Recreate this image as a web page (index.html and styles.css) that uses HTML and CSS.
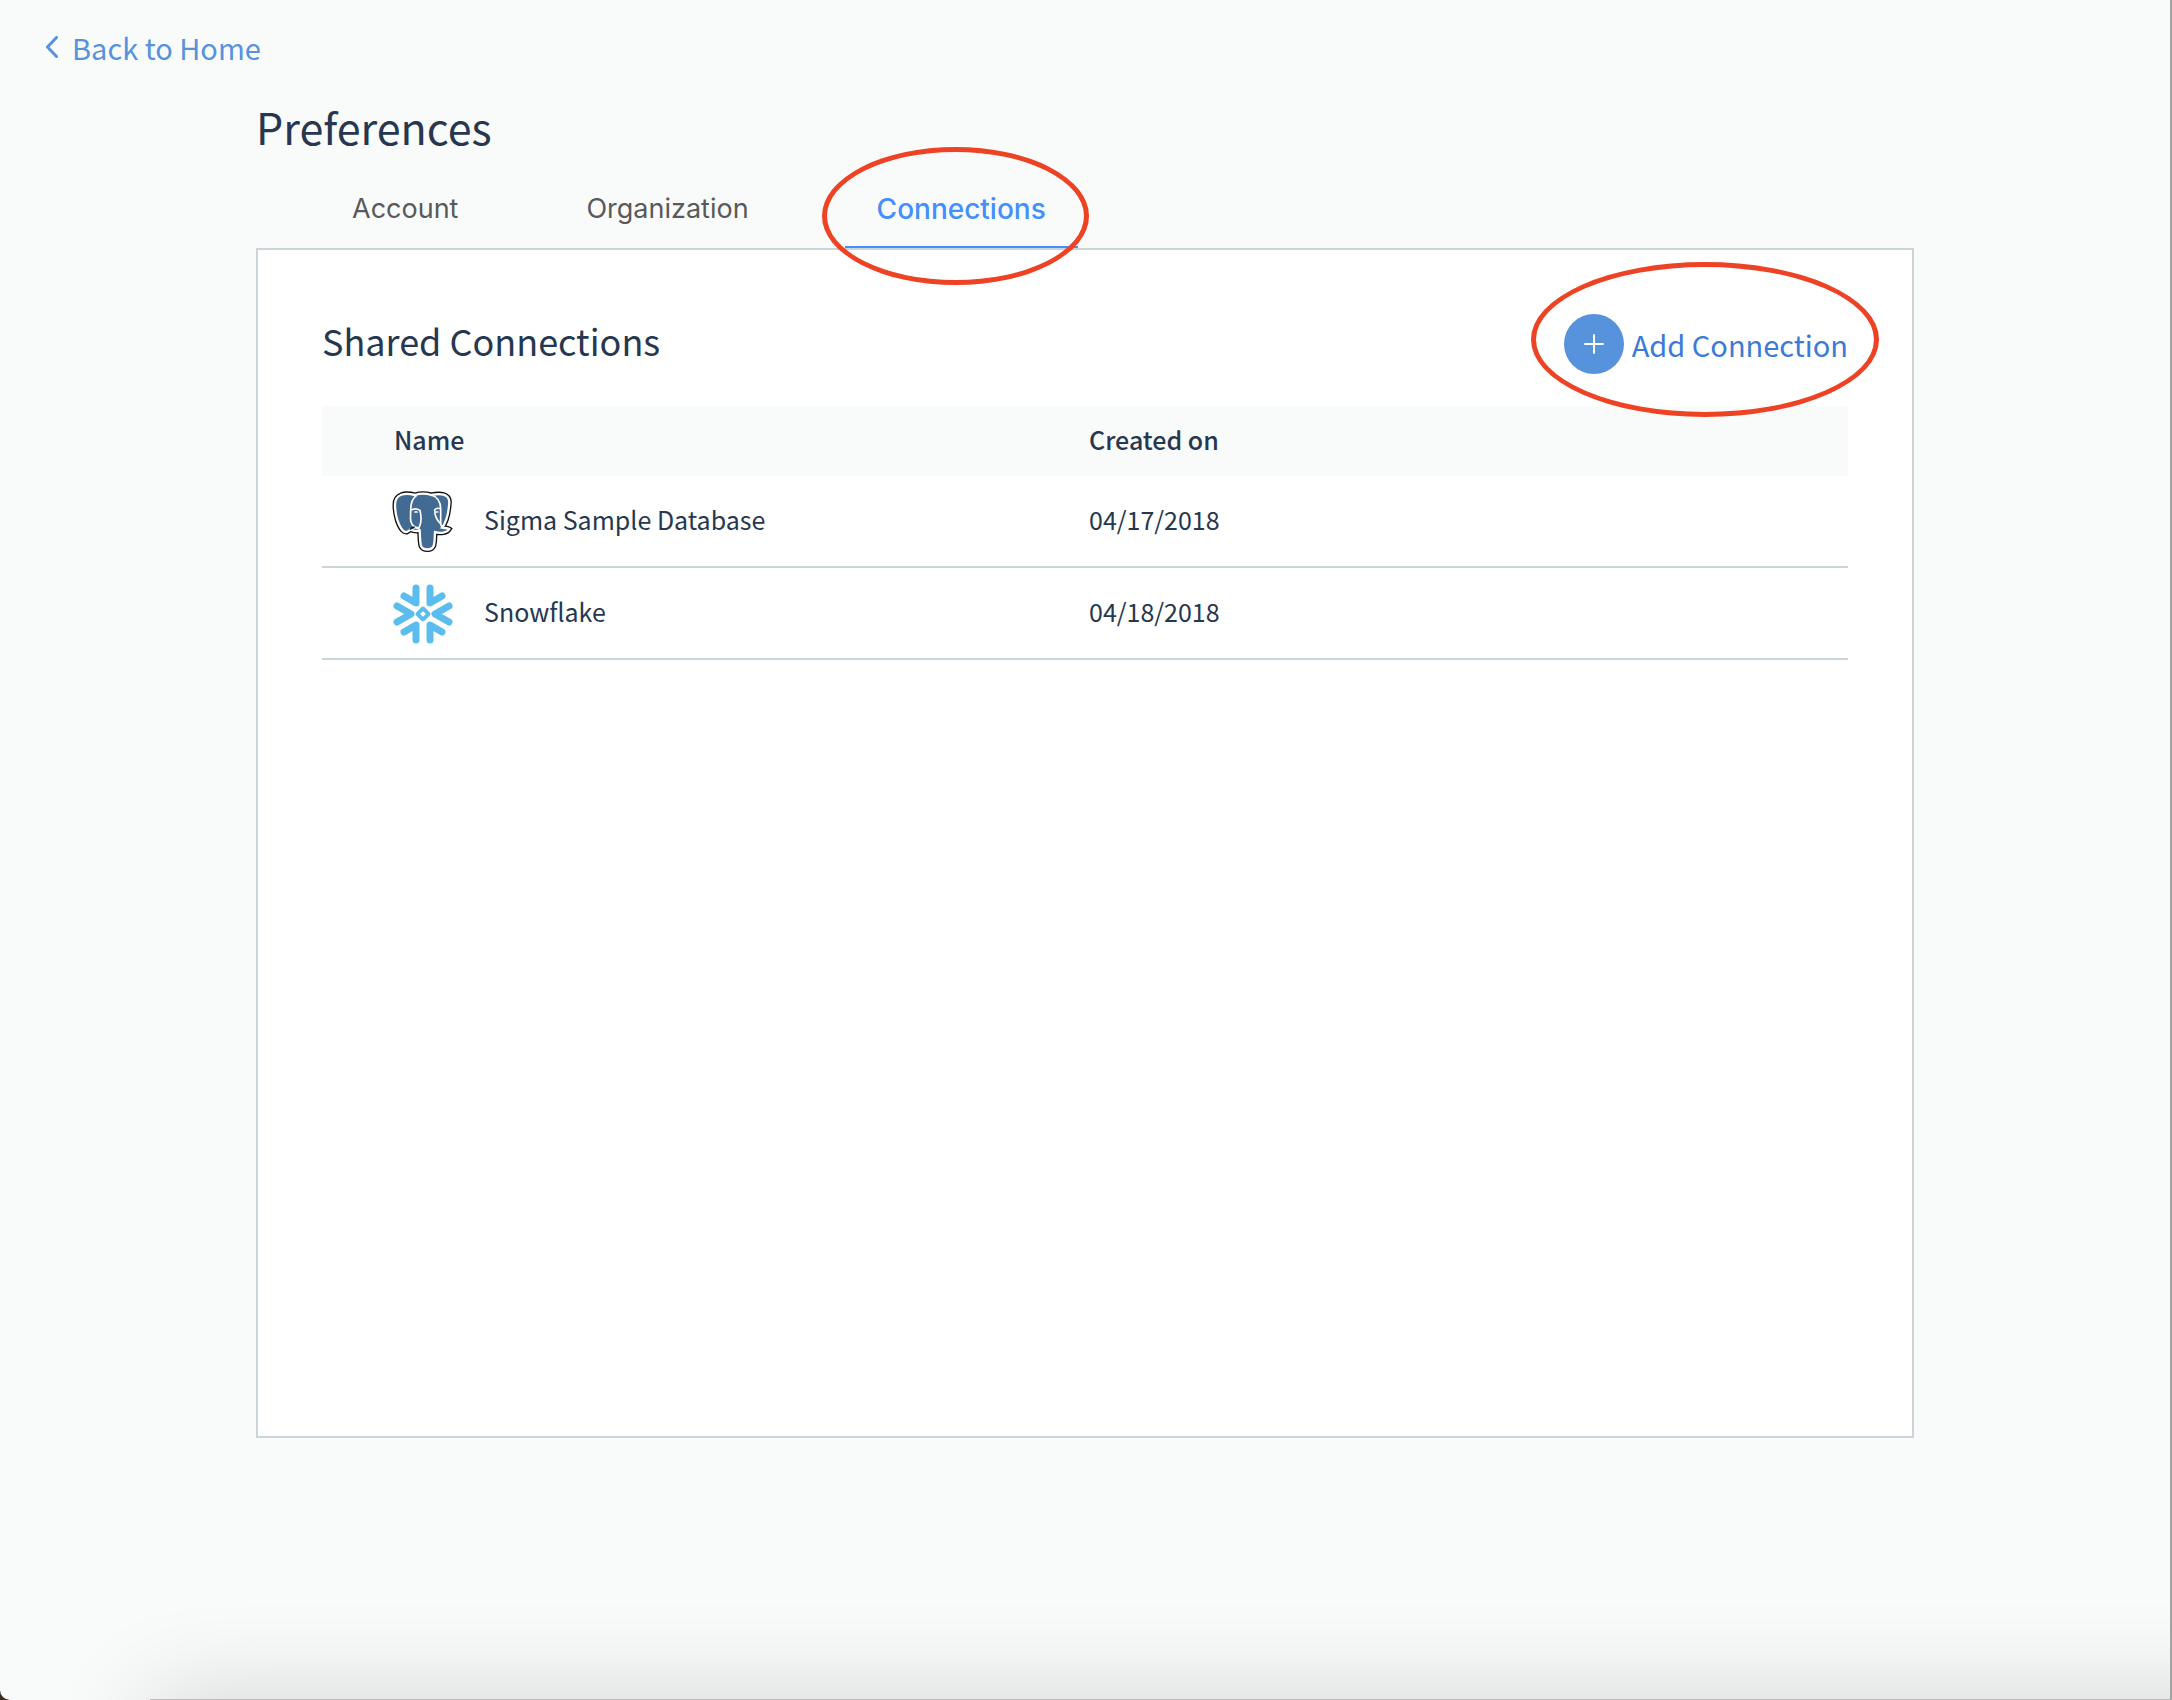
FILE: index.html
```html
<!DOCTYPE html>
<html lang="en">
<head>
<meta charset="utf-8">
<title>Preferences</title>
<link rel="stylesheet" href="styles.css">
</head>
<body>
<div class="window">
  <nav class="topbar">
    <a class="back" href="#">
      <svg class="back-icon" viewBox="0 0 12 22" aria-hidden="true"><path d="M10.500 1.500 1.500 11l9 9.500"/></svg>
      Back to Home
    </a>
  </nav>
  <main class="page">
    <h1 class="page-title">Preferences</h1>
    <div class="tabs" role="tablist">
      <button class="tab" role="tab" type="button">Account</button>
      <button class="tab" role="tab" type="button">Organization</button>
      <button class="tab tab-active" role="tab" type="button" aria-selected="true">Connections<span class="ring ring-tab"></span></button>
    </div>
    <section class="panel">
      <header class="panel-head">
        <h2 class="panel-title">Shared Connections</h2>
        <button class="add" type="button">
          <span class="add-icon"><svg viewBox="0 0 20 20" aria-hidden="true"><path d="M10 1v18M1 10h18"/></svg></span>
          Add Connection
          <span class="ring ring-add"></span>
        </button>
      </header>
      <table class="connections">
        <thead>
          <tr><th class="col-name">Name</th><th>Created on</th></tr>
        </thead>
        <tbody>
          <tr>
            <td class="col-name"><div class="source">
              <svg class="logo" viewBox="12 18 180 180" aria-hidden="true">
                <path class="pg-out" d="M75 30C45 22 15 26 15 60c0 30 10 62 23 76 9 9 17 5 23-3l9 4q9 2 19 0c1 18 1 36 4 46 6 14 32 14 38 0 4-12 3-26 4-42 16 5 36 3 43-9-6-4-14-2-22-4 12-14 20-46 22-76C178 26 150 24 124 30 108 25 90 25 75 30Z"/>
                <path class="pg-body" d="M75 30C45 22 15 26 15 60c0 30 10 62 23 76 9 9 17 5 23-3l9 4q9 2 19 0c1 18 1 36 4 46 6 14 32 14 38 0 4-12 3-26 4-42 16 5 36 3 43-9-6-4-14-2-22-4 12-14 20-46 22-76C178 26 150 24 124 30 108 25 90 25 75 30Z"/>
                <path class="pg-line" d="M80 31C66 40 62 56 62 76c8-5 20-5 28 0 4 18 5 36-2 50-6 8-22-2-26-18-1-12 0-20 0-32M124 30c20 6 28 22 28 42v42c0 6 2 10 6 13M152 72c-6-3-14-2-18 3 0 18 8 32 18 42M89 137c-2-10-12-12-19-7"/>
                <path class="pg-tusk" d="M60 134c3-5 8-7 14-8"/>
                <path class="pg-eye" d="M73 81h10M138 81h7"/>
              </svg>
              <span class="source-name">Sigma Sample Database</span>
            </div></td>
            <td><time class="date" datetime="2018-04-17">04/17/2018</time></td>
          </tr>
          <tr>
            <td class="col-name"><div class="source">
              <svg class="logo" viewBox="0 0 60 60" aria-hidden="true">
                <g class="sf">
                  <path d="M22 5v15L10 13M36 5v15l12-7M22 57V42l-12 7M36 57V42l12 7M3 23l14 8-14 8M55 23l-14 8 14 8"/>
                  <rect class="sf-core" x="25" y="27" width="8" height="8" rx="1" transform="rotate(45 29 31)"/>
                </g>
              </svg>
              <span class="source-name">Snowflake</span>
            </div></td>
            <td><time class="date" datetime="2018-04-18">04/18/2018</time></td>
          </tr>
        </tbody>
      </table>
    </section>
  </main>
  <div class="dock-shadow"></div>
</div>
</body>
</html>
```
FILE: styles.css
```css
* { box-sizing: border-box; }

body {
  margin: 0;
  background: #3a2c1c;
  color: #26374f;
  font-family: "Noto Sans CJK SC", "Noto Sans", sans-serif;
  font-size: 25px;
  line-height: 36px;
}

button {
  padding: 0;
  border: 0;
  background: none;
  font: inherit;
  cursor: pointer;
}

.window {
  position: relative;
  min-height: 100vh;
  overflow: hidden;
  border-right: 2px solid #a0a4a3;
  border-bottom-left-radius: 10px;
  background: #f9fbfa;
}

.topbar {
  display: flex;
  padding: 26px 46px 0;
}

.back {
  display: flex;
  align-items: center;
  gap: 14px;
  color: #5792dd;
  font-size: 29px;
  line-height: 42px;
  text-decoration: none;
}

.back-icon {
  width: 12px;
  height: 22px;
  fill: none;
  stroke: currentColor;
  stroke-width: 3;
  stroke-linecap: round;
  stroke-linejoin: round;
}

.page { padding: 26px 256px 0; }

.page-title {
  margin: 0;
  font-size: 43px;
  font-weight: 400;
  line-height: 64px;
}

.tabs {
  display: flex;
  gap: 64px;
  padding: 0 64px;
}

.tab {
  position: relative;
  padding: 28px 32px 14px;
  border-bottom: 2px solid transparent;
  color: #595959;
  font-family: Inter, sans-serif;
  font-size: 27px;
  line-height: 46px;
}

.tab-active {
  border-color: #438ffb;
  color: #438ffb;
  font-size: 28px;
  font-weight: 500;
}

.panel {
  min-height: 70vh;
  padding: 64px;
  border: 2px solid #cbd5d9;
  background: #fff;
}

.panel-head {
  display: flex;
  align-items: flex-start;
  justify-content: space-between;
  margin-bottom: 32px;
}

.panel-title {
  margin: 0;
  font-size: 36px;
  font-weight: 400;
  line-height: 52px;
}

.add {
  position: relative;
  display: flex;
  align-items: center;
  gap: 8px;
  color: #3b7ad6;
  font-size: 29px;
  line-height: 60px;
}

.add-icon {
  display: grid;
  place-items: center;
  width: 60px;
  height: 60px;
  border-radius: 50%;
  background: #5792dd;
}

.add-icon svg {
  width: 20px;
  height: 20px;
  stroke: #fff;
  stroke-width: 2;
  stroke-linecap: round;
}

/* Hand-drawn style highlight around a control */
.ring {
  position: absolute;
  border: 5px solid #ee4224;
  border-radius: 50%;
  pointer-events: none;
}

.ring-tab { inset: -11px -11px -39px -23px; z-index: 1; }
.ring-add { inset: -52px -31px -43px -33px; }

.connections {
  width: 100%;
  border-collapse: separate;
  border-spacing: 0;
  table-layout: fixed;
}

.connections th {
  height: 70px;
  padding: 0 0 4px;
  background: #f9fbfa;
  font-weight: 500;
  text-align: left;
}

.connections td {
  height: 92px;
  padding: 0;
  border-bottom: 2px solid #cbd5d9;
}

.connections .col-name {
  width: 767px;
  padding-left: 72px;
}

.source {
  display: flex;
  align-items: center;
  gap: 30px;
}

.source-name,
.date {
  display: block;
  padding-bottom: 4px;
}

.logo {
  width: 60px;
  height: 60px;
  overflow: visible;
}

.pg-out { fill: none; stroke: #111; stroke-width: 15; }
.pg-body { fill: #426b93; stroke: #fff; stroke-width: 7; }
.pg-line { fill: none; stroke: #fff; stroke-width: 5; }
.pg-tusk { fill: none; stroke: #111; stroke-width: 5; }
.pg-eye { stroke: #fff; stroke-width: 5; }

.sf {
  fill: none;
  stroke: #5bbcee;
  stroke-width: 7;
  stroke-linecap: round;
  stroke-linejoin: round;
}

.sf-core { stroke-width: 4; }

/* Soft shade rising from the bottom edge of the window */
.dock-shadow {
  position: absolute;
  top: calc(100% - 1px);
  right: -150px;
  left: 150px;
  height: 100px;
  background: #bbb;
  box-shadow: 0 0 100px rgba(0, 0, 0, 0.16);
}
```
